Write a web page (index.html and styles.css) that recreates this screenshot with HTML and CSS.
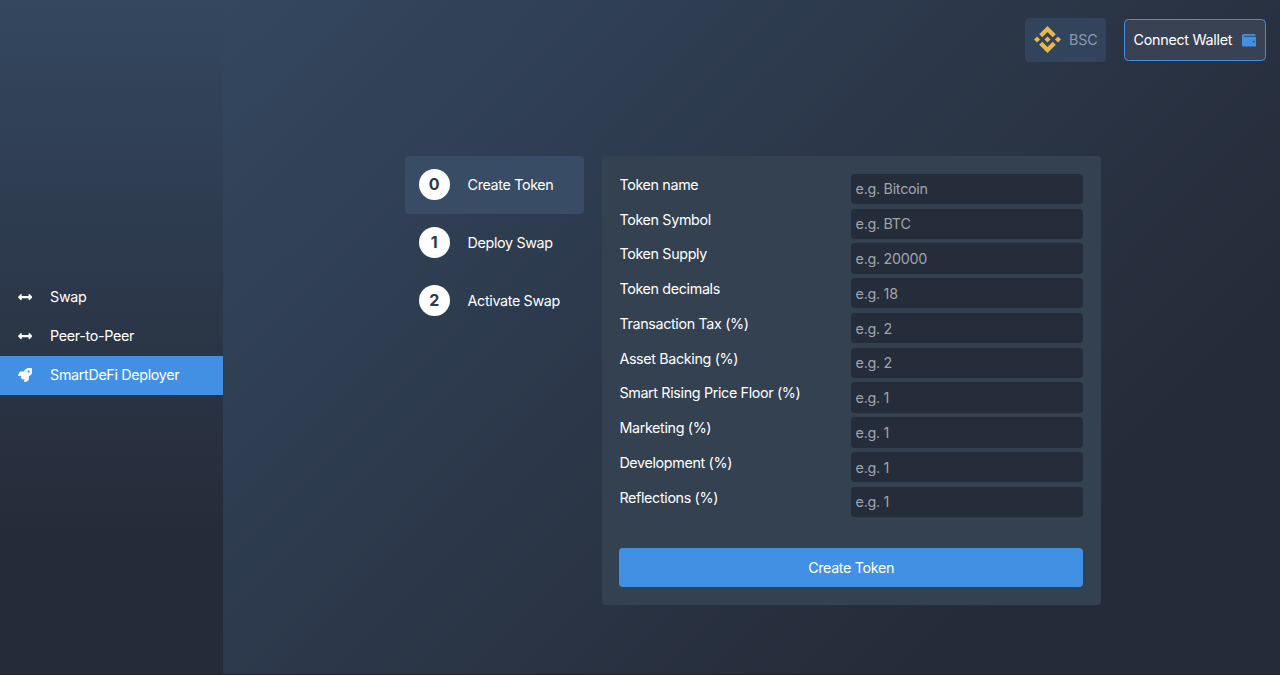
FILE: index.html
```html
<!DOCTYPE html>
<html lang="en">
<head>
<meta charset="utf-8">
<title>SmartDeFi Deployer</title>
<link rel="stylesheet" href="styles.css">
</head>
<body>
<div class="app">
  <nav class="sidebar">
    <a class="nav-item"><svg class="nav-icon" viewBox="0 0 512 512"><path d="M377.941 169.941V216H134.059v-46.059c0-21.382-25.851-32.09-40.971-16.971L7.029 239.029c-9.373 9.373-9.373 24.568 0 33.941l86.059 86.059c15.119 15.119 40.971 4.411 40.971-16.971V296h243.882v46.059c0 21.382 25.851 32.09 40.971 16.971l86.059-86.059c9.373-9.373 9.373-24.568 0-33.941l-86.059-86.059c-15.119-15.12-40.971-4.412-40.971 16.97z"/></svg><span>Swap</span></a>
    <a class="nav-item"><svg class="nav-icon" viewBox="0 0 512 512"><path d="M377.941 169.941V216H134.059v-46.059c0-21.382-25.851-32.09-40.971-16.971L7.029 239.029c-9.373 9.373-9.373 24.568 0 33.941l86.059 86.059c15.119 15.119 40.971 4.411 40.971-16.971V296h243.882v46.059c0 21.382 25.851 32.09 40.971 16.971l86.059-86.059c9.373-9.373 9.373-24.568 0-33.941l-86.059-86.059c-15.119-15.12-40.971-4.412-40.971 16.97z"/></svg><span>Peer-to-Peer</span></a>
    <a class="nav-item active"><svg class="nav-icon" viewBox="0 0 512 512"><path d="M505.12 19.094c-1.19-5.532-6.658-11-12.207-12.188C460.716 0 435.507 0 410.407 0 307.175 0 245.27 55.203 199.052 128H94.838c-16.348.016-35.557 11.875-42.887 26.484L2.516 253.297A28.4 28.4 0 0 0 0 264a24 24 0 0 0 24.006 24h103.81l-22.474 22.469c-11.366 11.361-12.996 32.258 0 45.25l50.904 50.906c11.156 11.188 32.156 13.156 45.277 0l22.475-22.469V488a24 24 0 0 0 24.006 24 28.56 28.56 0 0 0 10.707-2.516l98.728-49.39c14.629-7.297 26.508-26.5 26.508-42.86V312.797c72.598-46.313 128.035-108.406 128.035-211.094.093-25.203.093-50.406-6.862-82.609zM384.04 168A40 40 0 1 1 424.05 128a40.02 40.02 0 0 1-40.01 40z"/></svg><span>SmartDeFi Deployer</span></a>
  </nav>
  <main class="main">
    <header class="topbar">
      <div class="network"><svg class="bnb" viewBox="0 0 24 24"><path d="M16.624 13.9202l2.7175 2.7154-7.353 7.353-7.353-7.352 2.7175-2.7164 4.6355 4.6595 4.6356-4.6595zm4.6366-4.6366L24 12l-2.7154 2.7164L18.5682 12l2.6924-2.7164zm-9.272.001l2.7163 2.6914-2.7164 2.7174v-.001L9.2721 12l2.7164-2.7154zm-9.2722-.001L5.4088 12l-2.6914 2.6924L0 12l2.7164-2.7164zM11.9885.0115l7.353 7.329-2.7174 2.7154-4.6356-4.6356-4.6355 4.6595-2.7174-2.7154 7.353-7.353z"/></svg><span>BSC</span></div>
      <button class="connect"><span>Connect Wallet</span><svg class="wallet" viewBox="0 0 512 512"><path d="M461.2 128H80c-8.84 0-16-7.16-16-16s7.16-16 16-16h384c8.84 0 16-7.16 16-16 0-26.51-21.49-48-48-48H64C28.65 32 0 60.65 0 96v320c0 35.35 28.65 64 64 64h397.2c28.02 0 50.8-21.53 50.8-48V176c0-26.47-22.78-48-50.8-48zM416 336c-17.67 0-32-14.33-32-32s14.33-32 32-32 32 14.33 32 32-14.33 32-32 32z"/></svg></button>
    </header>
    <div class="content">
      <ol class="steps">
        <li class="step current"><span class="num">0</span><span>Create Token</span></li>
        <li class="step"><span class="num">1</span><span>Deploy Swap</span></li>
        <li class="step"><span class="num">2</span><span>Activate Swap</span></li>
      </ol>
      <form class="card">
        <label class="row"><span>Token name</span><input class="field" placeholder="e.g. Bitcoin"></label>
        <label class="row"><span>Token Symbol</span><input class="field" placeholder="e.g. BTC"></label>
        <label class="row"><span>Token Supply</span><input class="field" placeholder="e.g. 20000"></label>
        <label class="row"><span>Token decimals</span><input class="field" placeholder="e.g. 18"></label>
        <label class="row"><span>Transaction Tax (%)</span><input class="field" placeholder="e.g. 2"></label>
        <label class="row"><span>Asset Backing (%)</span><input class="field" placeholder="e.g. 2"></label>
        <label class="row"><span>Smart Rising Price Floor (%)</span><input class="field" placeholder="e.g. 1"></label>
        <label class="row"><span>Marketing (%)</span><input class="field" placeholder="e.g. 1"></label>
        <label class="row"><span>Development (%)</span><input class="field" placeholder="e.g. 1"></label>
        <label class="row"><span>Reflections (%)</span><input class="field" placeholder="e.g. 1"></label>
        <button class="submit" type="button">Create Token</button>
      </form>
    </div>
  </main>
</div>
</body>
</html>
```
FILE: styles.css
```css
* { box-sizing: border-box; }
body {
  margin: 0;
  font-family: Inter, "Liberation Sans", sans-serif;
  font-size: 14.3px;
  line-height: 21.4px;
  letter-spacing: -0.34px;
  color: #fff;
}
button, input { font: inherit; letter-spacing: inherit; color: inherit; }
.app {
  display: flex;
  height: 675px;
  overflow: hidden;
  background: #252b38;
  border-bottom: 1px solid #20242f;
}
.sidebar {
  width: 223px;
  flex: none;
  display: flex;
  flex-direction: column;
  justify-content: center;
  padding-bottom: 2px;
  background: linear-gradient(180deg, #34475f 0%, #252b38 81%);
}
.nav-item {
  display: flex;
  align-items: center;
  gap: 18px;
  height: 39.2px;
  padding-left: 17.8px;
}
.nav-item.active { background: #4190e4; }
.nav-icon { width: 14.3px; height: 14.3px; fill: #fff; }
.main {
  flex: 1;
  background: linear-gradient(135deg, #34475f 0%, #252b38 80%);
}
.topbar {
  display: flex;
  justify-content: flex-end;
  align-items: center;
  gap: 18px;
  padding: 17.6px 14.4px 0 0;
}
.network {
  display: flex;
  align-items: center;
  gap: 8.5px;
  width: 81px;
  height: 44.5px;
  padding-left: 9px;
  border-radius: 4px;
  background: #32445c;
  color: #8f98a8;
  letter-spacing: -0.2px;
}
.bnb { width: 27px; height: 27px; fill: #e6b94a; flex: none; }
.connect {
  display: flex;
  align-items: center;
  justify-content: space-between;
  width: 142px;
  height: 41.5px;
  padding: 0 8.6px 0 9px;
  border: 1px solid #4190e4;
  border-radius: 4.5px;
  background: #384252;
  letter-spacing: -0.28px;
}
.wallet { width: 14.5px; height: 14.5px; fill: #4190e4; }
.content {
  display: flex;
  align-items: flex-start;
  gap: 18px;
  padding: 93.9px 0 0 182.2px;
}
.steps { width: 178.4px; margin: 0; padding: 0; list-style: none; }
.step {
  display: flex;
  align-items: center;
  gap: 18px;
  height: 58px;
  padding-left: 13.4px;
  border-radius: 4px;
}
.step.current { background: #384c65; }
.num {
  width: 31px;
  height: 31px;
  border-radius: 50%;
  background: #fff;
  color: #2d3748;
  font-size: 16px;
  font-weight: 700;
  line-height: 31px;
  text-align: center;
}
.card {
  width: 499px;
  height: 449px;
  padding: 17.8px;
  border-radius: 4px;
  background: #344151;
}
.row {
  display: grid;
  grid-template-columns: 1fr 1fr;
  align-items: start;
  height: 34.78px;
}
.field {
  width: 100%;
  height: 30.4px;
  padding: 0 4.5px;
  border: 0;
  border-radius: 4px;
  background: #242d39;
  letter-spacing: -0.27px;
}
.field::placeholder { color: #a0a5ad; opacity: 1; }
.submit {
  width: 100%;
  height: 39.2px;
  margin-top: 26.6px;
  padding: 0;
  border: 0;
  border-radius: 4px;
  background: #4190e4;
}
```
